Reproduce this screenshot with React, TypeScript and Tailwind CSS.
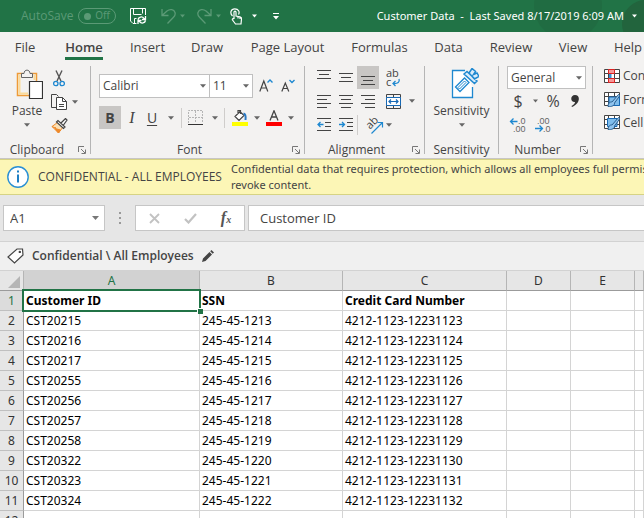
import type { ReactNode } from "react";

const GREY = "#444444";
const BLUE = "#1e88d0";

function Arrow({ className = "text-[#666]" }: { className?: string }) {
  return (
    <svg width="7" height="4" viewBox="0 0 7 4" className={`shrink-0 ${className}`} aria-hidden="true">
      <path d="M0 0h7L3.5 4z" fill="currentColor" />
    </svg>
  );
}

function IconButton({
  label,
  className = "w-[22px]",
  children,
}: {
  label: string;
  className?: string;
  children: ReactNode;
}) {
  return (
    <button type="button" aria-label={label} className={`flex h-full shrink-0 items-center justify-center ${className}`}>
      {children}
    </button>
  );
}

function Launcher({ label }: { label: string }) {
  return (
    <button type="button" aria-label={label} className="flex w-4 shrink-0 items-center justify-center">
      <svg width="8" height="8" viewBox="0 0 8 8" fill="none" stroke="#777" aria-hidden="true">
        <path d="M.5 6V.5H6M3 3l4 4M7.500 3.500v4h-4" />
      </svg>
    </button>
  );
}

function Group({
  name,
  width,
  launcher = true,
  children,
}: {
  name: string;
  width: string;
  launcher?: boolean;
  children: ReactNode;
}) {
  return (
    <section aria-label={name} className={`flex shrink-0 pt-0.5 ${width}`}>
      <div className="flex min-w-0 flex-1 flex-col">
        <div className="h-[76px]">{children}</div>
        <div className="flex h-4 items-center">
          <span className="flex-1 text-center">{name}</span>
          {launcher && <Launcher label={`${name} settings`} />}
        </div>
      </div>
      <span className="h-[88px] w-px bg-[#b5b5b5]" />
    </section>
  );
}

function Divider() {
  return <span className="h-5 w-px shrink-0 bg-[#cfcdcb]" />;
}

function Lines({ rows }: { rows: [number, number, number][] }) {
  return (
    <svg width="14" height="15" viewBox="0 0 14 15" stroke={GREY} aria-hidden="true">
      {rows.map(([x, y, w]) => (
        <path key={y} d={`M${x} ${y + 0.5}h${w}`} />
      ))}
    </svg>
  );
}

const tabs: [string, string][] = [
  ["File", "w-[50px]"],
  ["Home", "w-[68px]"],
  ["Insert", "w-[59px]"],
  ["Draw", "w-[60px]"],
  ["Page Layout", "w-[101px]"],
  ["Formulas", "w-[83px]"],
  ["Data", "w-[55px]"],
  ["Review", "w-[70px]"],
  ["View", "w-[54px]"],
  ["Help", "w-[56px]"],
];

function TitleBar() {
  return (
    <header className="relative flex h-8 shrink-0 items-center overflow-hidden bg-[#217346] font-[Noto_Sans,sans-serif] text-[11px] text-white">
      <svg width="120" height="32" viewBox="0 0 120 32" className="absolute top-0 right-0" aria-hidden="true">
        <circle cx="44" cy="6" r="34" fill="#206c42" />
        <circle cx="122" cy="24" r="24" fill="#22643d" />
      </svg>
      <label className="ml-[21px] flex items-center gap-[7px] text-[#5b9a76]">
        <span className="w-[50px] font-[Open_Sans,sans-serif] text-xs whitespace-nowrap">AutoSave</span>
        <input type="checkbox" role="switch" className="peer sr-only" />
        <span className="flex h-4 w-[38px] items-center justify-between rounded-full border border-[#5b9a76] px-[5px] text-[10px]">
          <span className="size-[7px] rounded-full bg-[#5b9a76]" />
          Off
        </span>
      </label>
      <div className="ml-3 flex h-full items-center">
        <IconButton label="Save" className="w-5">
          <svg width="17" height="17" viewBox="0 0 17 17" fill="none" stroke="#fff" aria-hidden="true">
            <path d="M6.500 15.500H3L.5 13V.5h15V7M3.500 .5v6h8M12.500 .5v5M4.500 15.500v-5h2" />
            <path d="M8 11.500c.6-2.600 4-3.600 6-1.200l1 1.200M15.500 8v3.500H12M15.500 12.500c-.6 2.600-4 3.600-6 1.200l-1-1.200M8 16v-3.500h3.500" strokeWidth="1.300" />
          </svg>
        </IconButton>
        <IconButton label="Undo" className="ml-3 w-4">
          <svg width="15" height="16" viewBox="0 0 15 16" fill="none" stroke="#5b9a76" strokeWidth="1.300" aria-hidden="true">
            <path d="M1 1v6.500h6.500M1 7.500 6 3c3-2.500 7-1.500 8 1.500.6 2-.2 3.500-1.500 4.800L6.500 15.500" />
          </svg>
        </IconButton>
        <IconButton label="Undo history" className="w-3">
          <Arrow className="w-[5px] text-[#5b9a76]" />
        </IconButton>
        <IconButton label="Redo" className="ml-2 w-4">
          <svg width="15" height="16" viewBox="0 0 15 16" fill="none" stroke="#5b9a76" strokeWidth="1.300" aria-hidden="true">
            <path d="M14 1v6.500H7.500M14 7.500 9 3C6 .5 2 1.500 1 4.500c-.6 2 .2 3.500 1.500 4.800l6 6.200" />
          </svg>
        </IconButton>
        <IconButton label="Redo history" className="w-3">
          <Arrow className="w-[5px] text-[#5b9a76]" />
        </IconButton>
        <IconButton label="Touch mode" className="ml-1 w-4">
          <svg width="13" height="17" viewBox="0 0 13 17" fill="none" stroke="#fff" strokeWidth="1.200" aria-hidden="true">
            <path d="M2.500 8C-.5 5 1 .8 4.800 .8S10 4 8.500 6.500" />
            <path d="M4 11V4.200c0-1.500 2-1.500 2 0V8l4 .8c1.200.3 1.700 1 1.500 2.200L11 16H5.500L2.500 12c-.7-1.200.6-2 1.500-1M8 8.500v2M10 9v2" />
          </svg>
        </IconButton>
        <IconButton label="Touch mode options" className="w-5">
          <Arrow className="w-[5px] text-white" />
        </IconButton>
        <IconButton label="Customize toolbar" className="w-6">
          <svg width="6" height="7" viewBox="0 0 6 7" fill="#fff" aria-hidden="true">
            <path d="M0 0h6v1H0zM0 3h6L3 6.500z" />
          </svg>
        </IconButton>
      </div>
      <button type="button" className="relative ml-auto mr-[7px] flex items-center gap-2 whitespace-pre">
        <span>Customer Data{"  -  "}Last Saved 8/17/2019 6:09 AM</span>
        <Arrow className="w-[5px] text-white" />
      </button>
    </header>
  );
}

function TabBar() {
  return (
    <nav className="flex h-8 shrink-0 overflow-hidden text-[13px]">
      {tabs.map(([name, width]) => (
        <button
          key={name}
          type="button"
          className={`flex shrink-0 items-center justify-center whitespace-nowrap ${width}`}
        >
          {name === "Home" ? (
            <span className="flex h-6 items-center border-b-[3px] border-[#217346] pt-[3px] font-semibold">{name}</span>
          ) : (
            name
          )}
        </button>
      ))}
    </nav>
  );
}

function Clipboard() {
  return (
    <Group name="Clipboard" width="w-[91px]">
      <div className="flex h-full pl-1">
        <button type="button" className="flex w-[46px] flex-col items-center pt-[3px]">
          <svg width="27" height="31" viewBox="0 0 27 31" fill="none" className="ml-1" aria-hidden="true">
            <path d="M7 4.500H1.500v22H13M15 4.500h5.500V12" stroke="#ee9b38" strokeWidth="1.500" />
            <path d="M3.500 6v18.500H12M18.500 6v5" stroke="#fbdb9a" strokeWidth="2" />
            <path d="M5.500 8.500V4.500H8c0-4.500 6-4.500 6 0h2.500v4z" fill="#f3f2f1" stroke="#666" />
            <path d="M13.500 12.500h13v17h-13z" fill="#fff" stroke="#333" strokeWidth="1.200" />
          </svg>
          <span className="mt-[3px] leading-4">Paste</span>
          <Arrow className="mt-1 w-[6px] text-[#666]" />
        </button>
        <div className="flex flex-col">
          <div className="flex h-6 items-center">
            <IconButton label="Cut" className="w-[18px]">
              <svg width="12" height="17" viewBox="0 0 12 17" fill="none" aria-hidden="true">
                <path d="M3 0.500 8 11M9 .5 4 11" stroke="#555" strokeWidth="1.400" />
                <circle cx="2.800" cy="13.500" r="2.200" stroke={BLUE} strokeWidth="1.300" />
                <circle cx="9.200" cy="13.500" r="2.200" stroke={BLUE} strokeWidth="1.300" />
              </svg>
            </IconButton>
          </div>
          <div className="flex h-6 items-center">
            <IconButton label="Copy" className="w-[18px]">
              <svg width="17" height="17" viewBox="0 0 17 17" fill="none" stroke="#444" aria-hidden="true">
                <path d="M6 13.500H.5V.5h5l2 2" />
                <path d="M5.500 3.500h6l4 4v8h-10z" fill="#fff" />
                <path d="M11.500 3.500v4h4M8 10.500h5M8 12.500h5" />
              </svg>
            </IconButton>
            <IconButton label="Copy options" className="w-[14px]">
              <Arrow className="w-[6px] text-[#666]" />
            </IconButton>
          </div>
          <div className="flex h-6 items-center">
            <IconButton label="Format painter" className="w-[18px]">
              <svg width="17" height="16" viewBox="0 0 17 16" fill="none" aria-hidden="true">
                <path d="M6.500 4.500 1 8.500 7.500 15l4.500-6z" fill="#fbe0b5" stroke="#ee8a2c" />
                <path d="M1 8.500 4 10l1-.5M4 10.500l3.500 4.500 2-3z" fill="#ee8a2c" stroke="#ee8a2c" />
                <path d="M5.500 4 7 2.500l7 6.500-1.500 1.500zM10 5l4.500-4.500L16 2l-3.500 5" fill="#fff" stroke="#444" strokeWidth="1.200" />
              </svg>
            </IconButton>
          </div>
        </div>
      </div>
    </Group>
  );
}

function FontGroup() {
  return (
    <Group name="Font" width="w-[214px]">
      <div className="flex h-full flex-col gap-2 pt-2 pl-2">
        <div className="flex h-6">
          <div className="relative w-[111px]">
            <select aria-label="Font" className="h-full w-full appearance-none border border-[#c0c0c0] bg-white pl-[3px]">
              <option>Calibri</option>
            </select>
            <Arrow className="pointer-events-none absolute top-[10px] right-1 w-[6px] text-[#666]" />
          </div>
          <div className="relative -ml-px w-[44px]">
            <select aria-label="Font size" className="h-full w-full appearance-none border border-[#c0c0c0] bg-white pl-[3px]">
              <option>11</option>
            </select>
            <Arrow className="pointer-events-none absolute top-[10px] right-1 w-[6px] text-[#666]" />
          </div>
          <IconButton label="Increase font size" className="ml-0.5 w-[22px]">
            <svg width="14" height="14" viewBox="0 0 14 14" fill="none" aria-hidden="true">
              <path d="M.8 12.500 4.800 2l4 10.500M2.300 9h5" stroke={GREY} strokeWidth="1.200" />
              <path d="M8.500 3.500 11 1l2.500 2.500" stroke={BLUE} strokeWidth="1.400" />
            </svg>
          </IconButton>
          <IconButton label="Decrease font size" className="w-[22px]">
            <svg width="14" height="14" viewBox="0 0 14 14" fill="none" aria-hidden="true">
              <path d="M.8 12.500 4.300 4l3.500 8.500M2 9.500h4.600" stroke={GREY} strokeWidth="1.200" />
              <path d="M8.500 1 11 3.500 13.500 1" stroke={BLUE} strokeWidth="1.400" />
            </svg>
          </IconButton>
        </div>
        <div className="flex h-[23px] items-center">
          <button type="button" className="flex h-full w-[22px] items-center justify-center bg-[#c8c6c4] text-sm font-bold">
            B
          </button>
          <button type="button" className="w-[22px] font-[Liberation_Serif,serif] text-base italic">
            I
          </button>
          <button type="button" className="w-[18px] text-sm underline underline-offset-2">
            U
          </button>
          <IconButton label="Underline options" className="w-5">
            <Arrow className="w-[6px] text-[#666]" />
          </IconButton>
          <Divider />
          <IconButton label="Borders" className="w-[27px]">
            <svg width="15" height="15" viewBox="0 0 15 15" fill="none" aria-hidden="true">
              <path d="M.5 13V.5h14V13M7.500 1v12M1 7.500h13" stroke="#b5b5b5" strokeDasharray="2 1" />
              <path d="M0 14.500h15" stroke="#333" />
            </svg>
          </IconButton>
          <IconButton label="Border options" className="mr-1 w-[11px]">
            <Arrow className="w-[6px] text-[#666]" />
          </IconButton>
          <Divider />
          <IconButton label="Fill color" className="ml-1.5 w-[18px]">
            <svg width="16" height="16" viewBox="0 0 16 16" fill="none" aria-hidden="true">
              <path d="M8 1.500 3 6.500l4 4 5-5zM6 4V.5h2.500V4" fill="#fff" stroke="#444" strokeWidth="1.200" />
              <path d="M11.500 3.500c2 .5 2.500 2.500 2 6.500" stroke="#2a79c4" strokeWidth="2" />
              <path d="M0 12h16v4H0z" fill="#ff0" />
            </svg>
          </IconButton>
          <IconButton label="Fill color options" className="w-4">
            <Arrow className="w-[6px] text-[#666]" />
          </IconButton>
          <IconButton label="Font color" className="w-[18px]">
            <svg width="16" height="16" viewBox="0 0 16 16" fill="none" aria-hidden="true">
              <path d="M4 10.500 8 .8l4 9.700M5.300 7h5.400" stroke={GREY} strokeWidth="1.300" />
              <path d="M0 12h16v4H0z" fill="#f00" />
            </svg>
          </IconButton>
          <IconButton label="Font color options" className="w-4">
            <Arrow className="w-[6px] text-[#666]" />
          </IconButton>
        </div>
      </div>
    </Group>
  );
}

function Alignment() {
  return (
    <Group name="Alignment" width="w-[120px]">
      <div className="flex h-full flex-col pl-2">
        <div className="flex h-[23px]">
          <IconButton label="Top align">
            <Lines rows={[[0, 0, 14], [2, 4, 10], [0, 8, 14]]} />
          </IconButton>
          <IconButton label="Middle align">
            <Lines rows={[[0, 3, 14], [2, 7, 10], [0, 11, 14]]} />
          </IconButton>
          <IconButton label="Bottom align" className="w-[22px] bg-[#c8c6c4]">
            <Lines rows={[[0, 6, 14], [2, 10, 10], [0, 14, 14]]} />
          </IconButton>
          <IconButton label="Wrap text" className="ml-[3px] w-[22px]">
            <svg width="15" height="18" viewBox="0 0 15 18" className="overflow-visible" aria-hidden="true">
              <text x="0" y="8" fontSize="11" fill={GREY}>ab</text>
              <text x="0" y="17" fontSize="11" fill={GREY}>c</text>
              <path d="M13 10c1 3-1 5-6 4.500M9.500 12 7 14.500 9.500 17" fill="none" stroke={BLUE} strokeWidth="1.300" />
            </svg>
          </IconButton>
        </div>
        <div className="flex h-6">
          <IconButton label="Align left">
            <Lines rows={[[0, 1, 14], [0, 5, 10], [0, 9, 14], [0, 13, 10]]} />
          </IconButton>
          <IconButton label="Center">
            <Lines rows={[[0, 1, 14], [2, 5, 10], [0, 9, 14], [2, 13, 10]]} />
          </IconButton>
          <IconButton label="Align right">
            <Lines rows={[[0, 1, 14], [4, 5, 10], [0, 9, 14], [4, 13, 10]]} />
          </IconButton>
          <IconButton label="Merge and center" className="ml-[3px] w-[22px]">
            <svg width="15" height="15" viewBox="0 0 15 15" fill="none" aria-hidden="true">
              <path d="M.5 .5h14v14H.5zM7.500 .5v3M7.500 11.500v3" stroke="#444" />
              <path d="M.5 3.500h14v8H.5z" fill="#fff" stroke="#1769b5" />
              <path d="M3 7.500h9M5 5.500l-2 2 2 2M10 5.500l2 2-2 2" stroke="#1769b5" strokeWidth="1.200" />
            </svg>
          </IconButton>
          <IconButton label="Merge options" className="w-4">
            <Arrow className="w-[6px] text-[#666]" />
          </IconButton>
        </div>
        <div className="flex h-6 items-center">
          <IconButton label="Decrease indent">
            <svg width="14" height="14" viewBox="0 0 14 14" fill="none" aria-hidden="true">
              <path d="M0 .5h14M8 4.500h6M8 8.500h6M0 12.500h14" stroke={GREY} />
              <path d="M1 6.500h5.500M3.500 4 1 6.500 3.500 9" stroke={BLUE} strokeWidth="1.300" />
            </svg>
          </IconButton>
          <IconButton label="Increase indent">
            <svg width="14" height="14" viewBox="0 0 14 14" fill="none" aria-hidden="true">
              <path d="M0 .5h14M8 4.500h6M8 8.500h6M0 12.500h14" stroke={GREY} />
              <path d="M0 6.500h5.500M3 4l2.500 2.500L3 9" stroke={BLUE} strokeWidth="1.300" />
            </svg>
          </IconButton>
          <Divider />
          <IconButton label="Orientation" className="ml-1 w-6">
            <svg width="17" height="17" viewBox="0 0 17 17" className="overflow-visible" aria-hidden="true">
              <text x="2" y="12" fontSize="11" fill={GREY} transform="rotate(-45 4 10)">ab</text>
              <path d="M5.500 16.500 16 6M11.500 5.500h5v5" fill="none" stroke={BLUE} strokeWidth="1.200" />
            </svg>
          </IconButton>
          <Arrow className="w-[6px] text-[#666]" />
        </div>
      </div>
    </Group>
  );
}

function Sensitivity() {
  return (
    <Group name="Sensitivity" width="w-[74px]" launcher={false}>
      <button type="button" className="flex h-full w-full flex-col items-center pt-0.5">
        <svg width="28" height="32" viewBox="0 0 28 32" fill="none" stroke={BLUE} className="ml-1.5" aria-hidden="true">
          <path d="M14 2.500H1.500v27h20V19" fill="#fff" strokeWidth="1.300" />
          <path d="M4.500 19 13.500 10l4.500 4.500L9 23.500z" fill="#fff" strokeWidth="1.300" />
          <path d="M7 19.500l6.500-6.500 1.500 1.500L8.500 21z" />
          <path d="M13 6 16 3.500 26 13l-2.500 2.500zM18 5l3-4.500 3.500 3-2 3 3.500-1.500 2 3.500-4.500 2.500z" fill="#d9ecfa" strokeWidth="1.500" />
        </svg>
        <span className="mt-[3px] leading-4">Sensitivity</span>
        <Arrow className="mt-1 w-[6px] text-[#666]" />
      </button>
    </Group>
  );
}

function NumberGroup() {
  return (
    <Group name="Number" width="w-[94px]">
      <div className="flex h-full flex-col pl-2">
        <div className="relative h-[23px] w-[79px]">
          <select aria-label="Number format" className="h-full w-full appearance-none border border-[#c0c0c0] bg-white pl-[3px]">
            <option>General</option>
          </select>
          <Arrow className="pointer-events-none absolute top-[10px] right-1 w-[6px] text-[#666]" />
        </div>
        <div className="flex h-6 items-center font-[Open_Sans,sans-serif] text-base">
          <button type="button" aria-label="Currency" className="w-[22px]">$</button>
          <IconButton label="Currency options" className="w-3">
            <Arrow className="w-[5px] text-[#666]" />
          </IconButton>
          <button type="button" aria-label="Percent" className="w-6">%</button>
          <IconButton label="Comma style" className="w-5">
            <svg width="8" height="12" viewBox="0 0 8 12" aria-hidden="true">
              <path d="M4 0c6 0 5 9-3 12L.5 11C3 9.500 4 8.500 4 7 -1 7.500-1 0 4 0z" fill="#333" />
            </svg>
          </IconButton>
        </div>
        <div className="flex h-6 items-center font-[Liberation_Sans,sans-serif]">
          <IconButton label="Increase decimal" className="w-6">
            <svg width="18" height="16" viewBox="0 0 18 16" fill="#666" fontSize="9" className="overflow-visible" aria-hidden="true">
              <text x="8" y="7">.0</text>
              <text x="3" y="15">.00</text>
              <path d="M0.500 4.500h7M3.500 1.500l-3 3 3 3" fill="none" stroke={BLUE} strokeWidth="1.300" />
            </svg>
          </IconButton>
          <IconButton label="Decrease decimal" className="w-6">
            <svg width="16" height="16" viewBox="0 0 16 16" fill="#666" fontSize="9" className="overflow-visible" aria-hidden="true">
              <text x="2" y="7">.00</text>
              <text x="8" y="15">.0</text>
              <path d="M0 11.500h7M4.500 8.500l3 3-3 3" fill="none" stroke={BLUE} strokeWidth="1.300" />
            </svg>
          </IconButton>
        </div>
      </div>
    </Group>
  );
}

function Styles() {
  const grid = <path d="M.5 .5h15v13H.5zM.5 4.500h15M.5 9.500h15M4.500 .5v13M10.500 .5v13" fill="#fff" stroke="#444" />;
  const brush = (
    <path d="M4 14.500c0-3 2-5 4-4.500l6.500-7.500 1.500 1L10.500 11c.5 2.500-3 4-6.500 3.500z" fill="#8fc3ee" stroke="#2a5f8f" />
  );
  return (
    <section aria-label="Styles" className="flex min-w-0 flex-1 flex-col overflow-hidden pl-[11px] whitespace-nowrap">
      <button type="button" className="flex h-6 shrink-0 items-center gap-[3px]">
        <svg width="16" height="14" viewBox="0 0 16 14" className="shrink-0" aria-hidden="true">
          {grid}
          <path d="M4.500 .5h6v4h-6zM4.500 9.500h6v4h-6z" fill="#f59a9a" stroke="#d22" />
          <path d="M5 5h2.500v4H5z" fill="#3b93d8" />
        </svg>
        Conditional Formatting
      </button>
      <button type="button" className="flex h-[23px] shrink-0 items-center gap-[3px]">
        <svg width="16" height="15" viewBox="0 0 16 15" className="shrink-0" aria-hidden="true">
          {grid}
          <path d="M5 5h10.500v8.500H5z" fill="#7fbdec" stroke="#1769b5" />
          {brush}
        </svg>
        Format as Table
      </button>
      <button type="button" className="flex h-[23px] shrink-0 items-center gap-[3px]">
        <svg width="16" height="15" viewBox="0 0 16 15" className="shrink-0" aria-hidden="true">
          {grid}
          <path d="M3.500 3.500h9.500v8H3.500z" fill="#7fbdec" stroke="#1769b5" />
          {brush}
        </svg>
        Cell Styles
      </button>
    </section>
  );
}

function InfoBar() {
  return (
    <div className="flex h-9 shrink-0 items-center overflow-hidden border-y border-[#d6d384] bg-[#fcf6b6] pl-[7px] whitespace-nowrap">
      <svg width="22" height="22" viewBox="0 0 22 22" className="shrink-0" aria-hidden="true">
        <circle cx="11" cy="11" r="10.200" fill="#fff" stroke="#2a8fd4" strokeWidth="1.400" />
        <path d="M10 4.500h2v2h-2zM10 8.500h2v8h-2z" fill="#1d7fc4" />
      </svg>
      <strong className="ml-[9px] w-[193px] shrink-0 font-normal">CONFIDENTIAL - ALL EMPLOYEES</strong>
      <p className="font-[Noto_Sans,sans-serif] text-[11px] leading-4">
        Confidential data that requires protection, which allows all employees full permissions
        <br />
        revoke content.
      </p>
    </div>
  );
}

function FormulaBar() {
  return (
    <div className="flex h-[46px] shrink-0 items-center bg-[#e6e6e6] pl-[3px] text-[13px]">
      <div className="relative h-[26px] w-[102px] shrink-0">
        <input aria-label="Name box" defaultValue="A1" className="h-full w-full border border-[#c6c6c6] bg-white pl-1.5" />
        <Arrow className="pointer-events-none absolute top-[11px] right-1.5 text-[#777]" />
      </div>
      <svg width="30" height="12" viewBox="0 0 30 12" fill="#999" className="shrink-0" aria-hidden="true">
        <path d="M14 0h2v2h-2zM14 5h2v2h-2zM14 10h2v2h-2z" />
      </svg>
      <div className="flex h-[26px] w-[110px] shrink-0 border border-[#c6c6c6] bg-white">
        <IconButton label="Cancel" className="flex-1">
          <svg width="11" height="11" viewBox="0 0 11 11" stroke="#c2c2c2" strokeWidth="1.800" aria-hidden="true">
            <path d="M1 1l9 9M10 1l-9 9" />
          </svg>
        </IconButton>
        <IconButton label="Enter" className="flex-1">
          <svg width="13" height="11" viewBox="0 0 13 11" fill="none" stroke="#c2c2c2" strokeWidth="2.200" aria-hidden="true">
            <path d="M1 6l3.500 3.500L12 1" />
          </svg>
        </IconButton>
        <button type="button" aria-label="Insert function" className="flex-1 font-[Liberation_Serif,serif] text-base font-bold italic text-[#555]">
          f<span className="text-[10px]">x</span>
        </button>
      </div>
      <input
        aria-label="Formula"
        defaultValue="Customer ID"
        className="ml-[3px] h-[26px] min-w-0 flex-1 border border-r-0 border-[#c6c6c6] bg-white pl-[11px]"
      />
    </div>
  );
}

function LabelBar() {
  return (
    <div className="flex h-[30px] shrink-0 items-center border-y border-[#d2d2d2] bg-[#f0f0f0] pl-[7px]">
      <svg width="17" height="16" viewBox="0 0 17 16" fill="#fff" stroke="#444" strokeWidth="1.200" aria-hidden="true">
        <path d="M10 1h5.500l.5 6-8.500 8L1 9z" />
        <circle cx="12.800" cy="3.900" r=".6" fill="#444" />
      </svg>
      <span className="ml-2 font-semibold">Confidential \ All Employees</span>
      <button type="button" aria-label="Edit label" className="ml-2">
        <svg width="12" height="12" viewBox="0 0 12 12" fill="#444" aria-hidden="true">
          <path d="M0 12l1-3.500L7.500 2 10 4.500 3.500 11zM8.200 1.300 9.500 0 12 2.500l-1.300 1.300z" />
        </svg>
      </button>
    </div>
  );
}

const records = [
  ["Customer ID", "SSN", "Credit Card Number"],
  ["CST20215", "245-45-1213", "4212-1123-12231123"],
  ["CST20216", "245-45-1214", "4212-1123-12231124"],
  ["CST20217", "245-45-1215", "4212-1123-12231125"],
  ["CST20255", "245-45-1216", "4212-1123-12231126"],
  ["CST20256", "245-45-1217", "4212-1123-12231127"],
  ["CST20257", "245-45-1218", "4212-1123-12231128"],
  ["CST20258", "245-45-1219", "4212-1123-12231129"],
  ["CST20322", "245-45-1220", "4212-1123-12231130"],
  ["CST20323", "245-45-1221", "4212-1123-12231131"],
  ["CST20324", "245-45-1222", "4212-1123-12231132"],
  ["", "", ""],
];

function Sheet() {
  return (
    <table className="w-full table-fixed border-separate border-spacing-0 bg-white font-[Noto_Sans,sans-serif] text-xs leading-[18px] text-black">
      <colgroup>
        <col className="w-6" />
        <col className="w-44" />
        <col className="w-[143px]" />
        <col className="w-[164px]" />
        <col className="w-16" />
        <col className="w-16" />
        <col />
      </colgroup>
      <thead>
        <tr className="text-[#333]">
          <th className="h-5 border-r border-b border-[#9b9b9b] border-r-[#b5b5b5] bg-[#e6e6e6] p-0">
            <svg width="12" height="12" viewBox="0 0 12 12" className="mt-0.5 ml-2" aria-hidden="true">
              <path d="M12 0v12H0z" fill="#b5b5b5" />
            </svg>
          </th>
          {["A", "B", "C", "D", "E", ""].map((name) => (
            <th
              key={name}
              className={`h-5 border-r border-b border-[#9b9b9b] border-r-[#b5b5b5] p-0 pt-px font-normal ${
                name === "A" ? "bg-[#d2d2d2] text-[#217346]" : "bg-[#e6e6e6]"
              }`}
            >
              {name}
            </th>
          ))}
        </tr>
      </thead>
      <tbody>
        {records.map((cells, row) => (
          <tr key={row} className={row === 0 ? "font-bold" : ""}>
            <th
              className={`h-5 border-r border-b border-[#c0c0c0] border-r-[#9b9b9b] p-0 pt-px font-normal ${
                row === 0 ? "bg-[#dcdcdc] text-[#217346]" : "bg-[#e6e6e6] text-[#333]"
              }`}
            >
              {row + 1}
            </th>
            {[...cells, "", "", ""].map((value, col) => (
              <td key={col} className="relative h-5 border-r border-b border-[#d4d4d4] pt-px pr-0 pb-0 pl-0.5 whitespace-nowrap">
                {value}
                {row === 0 && col === 0 && (
                  <span className="pointer-events-none absolute -inset-0.5 z-10 border-2 border-[#217346]">
                    <span className="absolute -right-1 -bottom-1 size-1.5 border-t border-l border-white bg-[#217346]" />
                  </span>
                )}
              </td>
            ))}
          </tr>
        ))}
      </tbody>
    </table>
  );
}

export default function App() {
  return (
    <div className="flex h-screen flex-col overflow-hidden bg-[#f3f2f1] font-[Open_Sans,Noto_Sans,sans-serif] text-xs text-[#444]">
      <TitleBar />
      <TabBar />
      <div className="flex h-[95px] shrink-0 overflow-hidden border-b border-[#c8c6c4]">
        <Clipboard />
        <FontGroup />
        <Alignment />
        <Sensitivity />
        <NumberGroup />
        <Styles />
      </div>
      <InfoBar />
      <FormulaBar />
      <LabelBar />
      <main className="min-h-0 flex-1 overflow-hidden">
        <Sheet />
      </main>
    </div>
  );
}
